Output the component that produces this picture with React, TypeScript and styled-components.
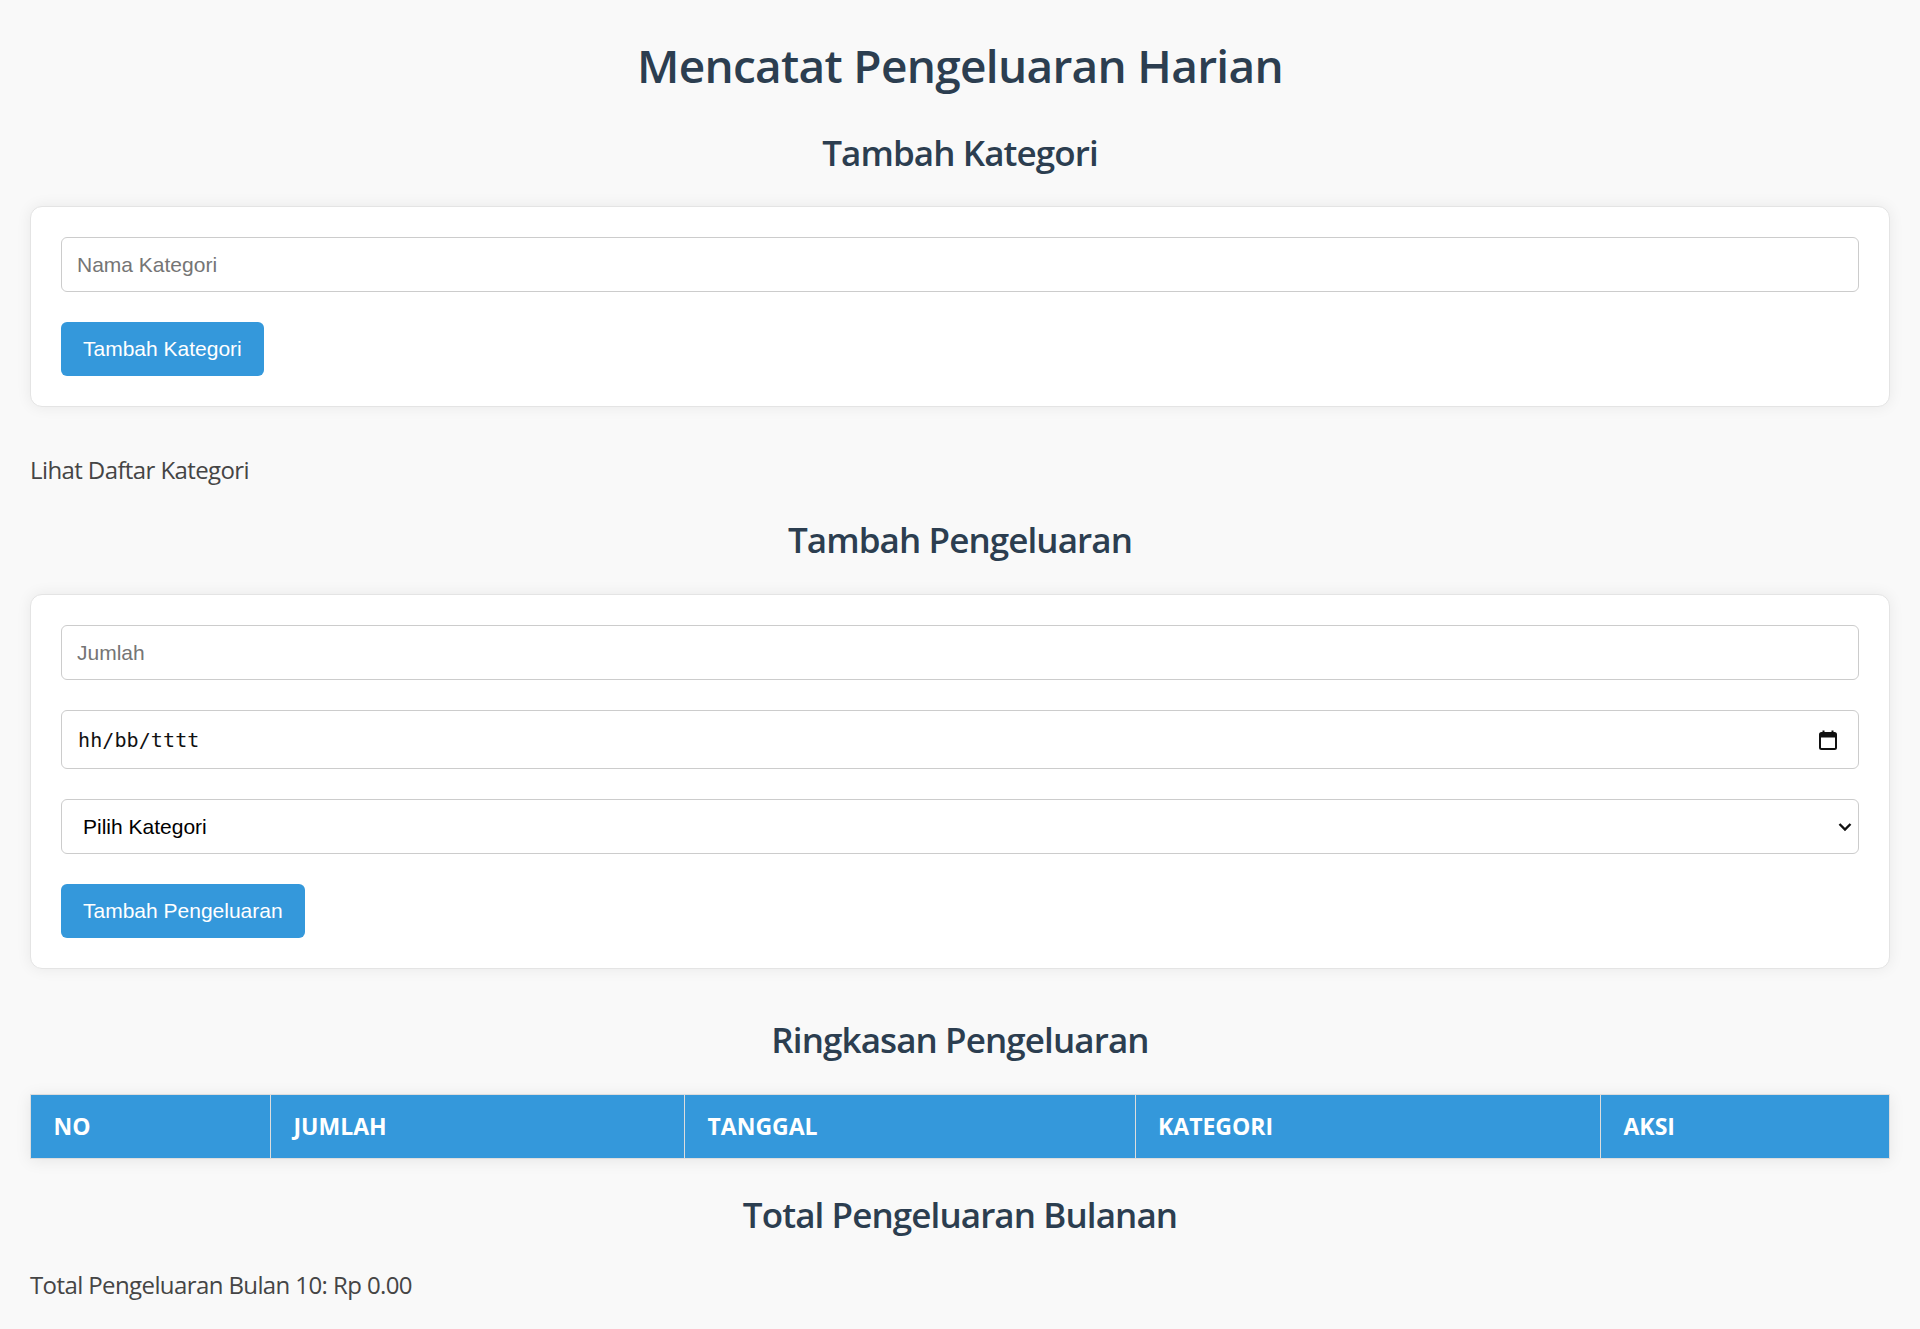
import React from 'react';
import styled, { createGlobalStyle } from 'styled-components';

const GlobalStyle = createGlobalStyle`
  html, body {
    margin: 0;
    padding: 0;
    background: #f9f9f9;
  }
  body {
    font-family: 'Open Sans', 'Noto Sans', sans-serif;
    color: #333;
  }
  *, *::before, *::after {
    box-sizing: border-box;
  }
`;

const Page = styled.main`
  display: flex;
  flex-direction: column;
  padding: 33px 30px 28px;
`;

const Title = styled.h1`
  margin: 0 0 32px;
  font-size: 46px;
  line-height: 64px;
  font-weight: 600;
  letter-spacing: -0.7px;
  color: #2c3e50;
  text-align: center;
`;

const SectionTitle = styled.h2<{ $mt: number; $mb: number }>`
  margin: ${(p) => p.$mt}px 0 ${(p) => p.$mb}px;
  font-size: 35px;
  line-height: 48px;
  font-weight: 600;
  letter-spacing: -0.9px;
  color: #2c3e50;
  text-align: center;
`;

const Card = styled.section`
  display: flex;
  flex-direction: column;
  align-items: flex-start;
  gap: 30px;
  padding: 30px;
  background: #ffffff;
  border: 1px solid #e4e4e4;
  border-radius: 12px;
  box-shadow: 0 0 15px rgba(0, 0, 0, 0.07);
`;

const TextInput = styled.input`
  width: 100%;
  height: 55px;
  padding: 0 15px;
  border: 1px solid #cccccc;
  border-radius: 6px;
  background: #fff;
  font-family: 'Liberation Sans', Arial, sans-serif;
  font-size: 21px;
  color: #000;
  outline: none;
  &::placeholder {
    color: #757575;
  }
`;

const DateField = styled.div`
  width: 100%;
  height: 59px;
  padding: 0 21px 0 16px;
  display: flex;
  align-items: center;
  justify-content: space-between;
  border: 1px solid #cccccc;
  border-radius: 6px;
  background: #fff;
`;

const DateText = styled.span`
  font-family: 'DejaVu Sans Mono', 'Liberation Mono', monospace;
  font-size: 20px;
  letter-spacing: 0.1px;
  color: #111;
`;

const SelectWrap = styled.div`
  position: relative;
  width: 100%;
`;

const Select = styled.select`
  width: 100%;
  height: 55px;
  padding: 0 40px 0 21px;
  appearance: none;
  -webkit-appearance: none;
  border: 1px solid #cccccc;
  border-radius: 6px;
  background: #fff;
  font-family: 'Liberation Sans', Arial, sans-serif;
  font-size: 21px;
  color: #000;
  outline: none;
`;

const Chevron = styled.svg`
  position: absolute;
  right: 7px;
  top: 50%;
  transform: translateY(-50%);
  pointer-events: none;
`;

const Button = styled.button`
  height: 54px;
  padding: 0 22px;
  border: none;
  border-radius: 6px;
  background: #3498db;
  color: #ffffff;
  font-family: 'Liberation Sans', Arial, sans-serif;
  font-size: 21px;
  cursor: pointer;
`;

const Note = styled.p<{ $mt: number }>`
  margin: ${(p) => p.$mt}px 0 0;
  font-size: 24px;
  line-height: 32px;
  font-weight: 400;
  letter-spacing: -0.6px;
  color: #454545;
`;

const Table = styled.table`
  width: 100%;
  table-layout: fixed;
  border-collapse: collapse;
  box-shadow: 0 2px 15px rgba(0, 0, 0, 0.08);
`;

const Th = styled.th`
  padding: 18px 22.5px;
  border: 1px solid #dddddd;
  background: #3498db;
  color: #ffffff;
  text-align: left;
  text-transform: uppercase;
  font-size: 23px;
  line-height: 27px;
  font-weight: 700;
`;

const columns = [
  { label: 'No', width: 240 },
  { label: 'Jumlah', width: 414 },
  { label: 'Tanggal', width: 450.5 },
  { label: 'Kategori', width: 465.5 },
  { label: 'Aksi', width: 289 },
];

export default function App() {
  return (
    <>
      <GlobalStyle />
      <Page>
        <Title>Mencatat Pengeluaran Harian</Title>

        <SectionTitle $mt={0} $mb={29}>Tambah Kategori</SectionTitle>
        <Card>
          <TextInput type="text" placeholder="Nama Kategori" />
          <Button type="button">Tambah Kategori</Button>
        </Card>

        <Note $mt={47}>Lihat Daftar Kategori</Note>

        <SectionTitle $mt={29.5} $mb={30.5}>Tambah Pengeluaran</SectionTitle>
        <Card>
          <TextInput type="text" placeholder="Jumlah" />
          <DateField>
            <DateText>hh/bb/tttt</DateText>
            <svg width="18" height="20" viewBox="0 0 18 20" aria-hidden="true">
              <rect x="1" y="3" width="16" height="16" rx="1.5" fill="none" stroke="#111" strokeWidth="2" />
              <rect x="1" y="3" width="16" height="4.5" fill="#111" />
              <rect x="3.5" y="0.5" width="2" height="3" fill="#111" />
              <rect x="12.5" y="0.5" width="2" height="3" fill="#111" />
            </svg>
          </DateField>
          <SelectWrap>
            <Select defaultValue="">
              <option value="">Pilih Kategori</option>
            </Select>
            <Chevron width="14" height="9" viewBox="0 0 14 9" aria-hidden="true">
              <polyline points="1.5,1.5 7,7 12.5,1.5" fill="none" stroke="#111" strokeWidth="2.4" />
            </Chevron>
          </SelectWrap>
          <Button type="button">Tambah Pengeluaran</Button>
        </Card>

        <SectionTitle $mt={47} $mb={30}>Ringkasan Pengeluaran</SectionTitle>
        <Table>
          <colgroup>
            {columns.map((c) => (
              <col key={c.label} style={{ width: `${c.width}px` }} />
            ))}
          </colgroup>
          <thead>
            <tr>
              {columns.map((c) => (
                <Th key={c.label}>{c.label}</Th>
              ))}
            </tr>
          </thead>
          <tbody />
        </Table>

        <SectionTitle $mt={31.5} $mb={30}>Total Pengeluaran Bulanan</SectionTitle>
        <Note $mt={0}>Total Pengeluaran Bulan 10: Rp 0.00</Note>
      </Page>
    </>
  );
}
